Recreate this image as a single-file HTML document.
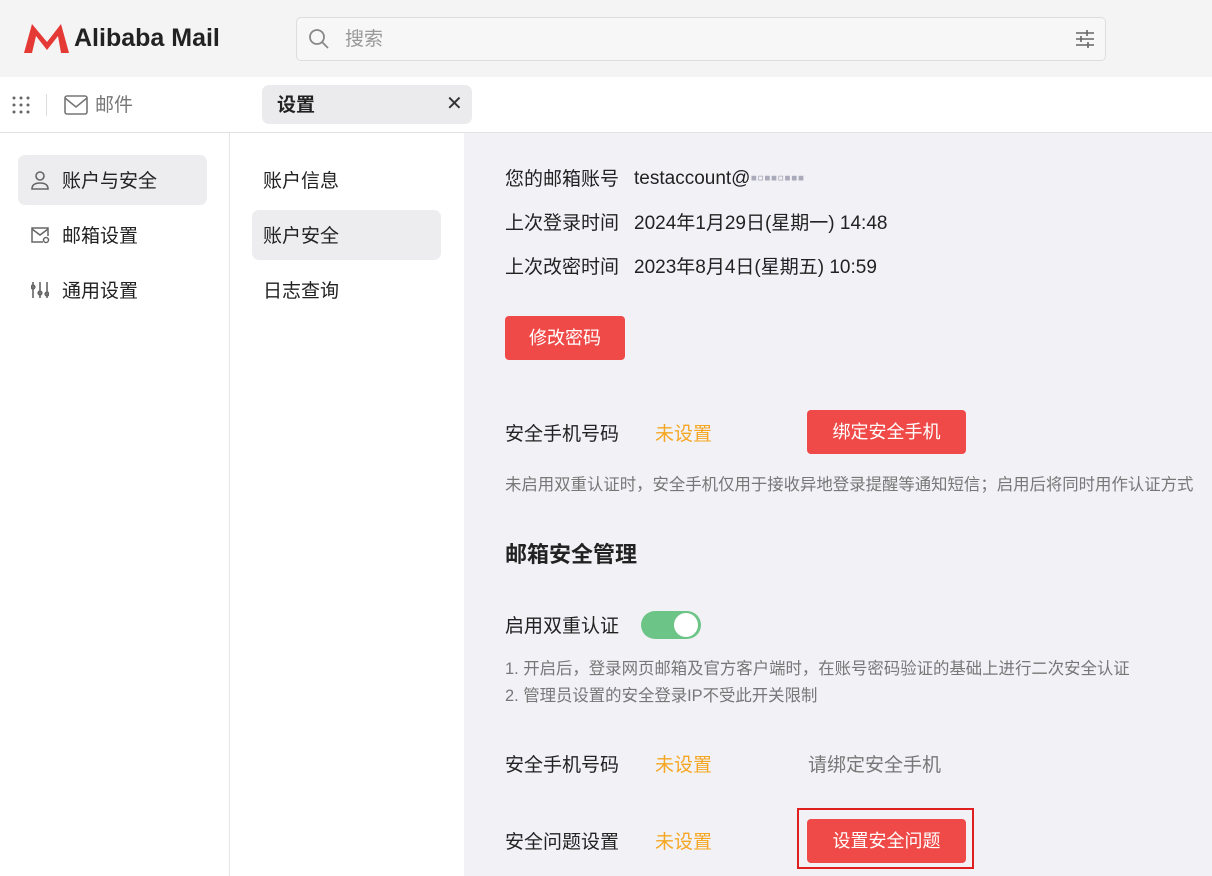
<!DOCTYPE html>
<html><head><meta charset="utf-8"><style>
*{margin:0;padding:0;box-sizing:border-box}
body{width:1212px;height:876px;overflow:hidden;font-family:"Liberation Sans","Noto Sans CJK SC",sans-serif;background:#fff;position:relative;color:#222}
.a{position:absolute;white-space:nowrap}
.top{left:0;top:0;width:1212px;height:77px;background:#f4f4f5}
.search{left:296px;top:17px;width:810px;height:44px;border:1px solid #ddd;border-radius:5px;background:#f7f7f8}
.bar{left:0;top:77px;width:1212px;height:56px;background:#fff;border-bottom:1px solid #e2e2e4}
.main{left:464px;top:133px;width:748px;height:743px;background:#f2f1f6}
.f17{font-size:19px}
.btn{background:#ef4a48;color:#fff;border-radius:4px;font-size:18px;text-align:center}
.or{color:#f5a623;font-size:19px}
.g{color:#777;font-size:16.4px}
</style></head><body>
<div class="a top"></div>
<svg class="a" style="left:24px;top:24px" width="46" height="30" viewBox="0 0 46 30"><path d="M0 29 L8 0 L23 18 L37 0 L45 29 L37 29 L34 12 L23 26 L12 12 L8 29Z" fill="#e53935"/></svg>
<div class="a" style="left:74px;top:24px;font-size:25px;font-weight:bold;color:#222">Alibaba Mail</div>
<div class="a search"></div>
<svg class="a" style="left:308px;top:28px" width="22" height="22" viewBox="0 0 22 22"><circle cx="9" cy="9" r="7" fill="none" stroke="#888" stroke-width="1.8"/><path d="M14 14l6 6" stroke="#888" stroke-width="1.8"/></svg>
<div class="a" style="left:345px;top:24px;font-size:19px;color:#999">搜索</div>
<svg class="a" style="left:1075px;top:29px" width="20" height="20" viewBox="0 0 20 20" stroke="#666" stroke-width="1.6"><path d="M1 4h18M1 10h18M1 16h18"/><path d="M12 1v6M6 7v6M13 13v6" /></svg>
<div class="a bar"></div>
<svg class="a" style="left:12px;top:96px" width="18" height="18"><g fill="#666"><circle cx="2" cy="2" r="1.5"/><circle cx="9" cy="2" r="1.5"/><circle cx="16" cy="2" r="1.5"/><circle cx="2" cy="9" r="1.5"/><circle cx="9" cy="9" r="1.5"/><circle cx="16" cy="9" r="1.5"/><circle cx="2" cy="16" r="1.5"/><circle cx="9" cy="16" r="1.5"/><circle cx="16" cy="16" r="1.5"/></g></svg>
<div class="a" style="left:46px;top:94px;width:1px;height:22px;background:#ddd"></div>
<svg class="a" style="left:64px;top:95px" width="24" height="20"><rect x="1" y="1" width="22" height="18" rx="2" fill="none" stroke="#777" stroke-width="1.6"/><path d="M1 3l11 9 11-9" fill="none" stroke="#777" stroke-width="1.6"/></svg>
<div class="a" style="left:95px;top:90px;font-size:19px;color:#777">邮件</div>
<div class="a" style="left:262px;top:85px;width:210px;height:39px;background:#ebebee;border-radius:7px"></div>
<div class="a" style="left:277px;top:90px;font-size:19px;font-weight:bold;color:#222">设置</div>
<div class="a" style="left:446px;top:91px;font-size:20px;color:#333">✕</div>
<div class="a" style="left:229px;top:133px;width:1px;height:743px;background:#e5e5e7"></div>
<div class="a" style="left:18px;top:155px;width:189px;height:50px;background:#ededf0;border-radius:7px"></div>
<svg class="a" style="left:30px;top:170px" width="20" height="20" fill="none" stroke="#666" stroke-width="1.6"><circle cx="10" cy="6" r="4"/><path d="M2 19c0-5 4-6 8-6s8 1 8 6z"/></svg>
<div class="a f17" style="left:62px;top:166px">账户与安全</div>
<svg class="a" style="left:30px;top:226px" width="20" height="18" fill="none" stroke="#666" stroke-width="1.5"><path d="M13 16H2V2h16v8"/><path d="M2 3l8 6 8-6"/><circle cx="16" cy="14" r="2.5"/></svg>
<div class="a f17" style="left:62px;top:221px">邮箱设置</div>
<svg class="a" style="left:31px;top:281px" width="18" height="18" stroke="#666" stroke-width="1.6" fill="none"><path d="M2 1v16M9 1v16M16 1v16"/><circle cx="2" cy="6" r="1.8"/><circle cx="9" cy="12" r="1.8"/><circle cx="16" cy="13" r="1.8"/></svg>
<div class="a f17" style="left:62px;top:276px">通用设置</div>
<div class="a f17" style="left:263px;top:166px">账户信息</div>
<div class="a" style="left:252px;top:210px;width:189px;height:50px;background:#ededf0;border-radius:7px"></div>
<div class="a f17" style="left:263px;top:221px">账户安全</div>
<div class="a f17" style="left:263px;top:276px">日志查询</div>
<div class="a main"></div>
<div class="a f17" style="left:505px;top:164px">您的邮箱账号</div>
<div class="a f17" style="left:634px;top:168px">testaccount@<span style="color:#aab">▪▫▪▪▫▪▪▪</span></div>
<div class="a f17" style="left:505px;top:208px">上次登录时间</div>
<div class="a f17" style="left:634px;top:208px">2024年1月29日(星期一) 14:48</div>
<div class="a f17" style="left:505px;top:252px">上次改密时间</div>
<div class="a f17" style="left:634px;top:252px">2023年8月4日(星期五) 10:59</div>
<div class="a btn" style="left:505px;top:316px;width:120px;height:44px;line-height:44px">修改密码</div>
<div class="a f17" style="left:505px;top:419px">安全手机号码</div>
<div class="a or" style="left:655px;top:419px">未设置</div>
<div class="a btn" style="left:807px;top:410px;width:159px;height:44px;line-height:44px">绑定安全手机</div>
<div class="a g" style="left:505px;top:471px">未启用双重认证时，安全手机仅用于接收异地登录提醒等通知短信；启用后将同时用作认证方式</div>
<div class="a" style="left:505px;top:537px;font-size:22px;font-weight:bold">邮箱安全管理</div>
<div class="a f17" style="left:505px;top:611px">启用双重认证</div>
<div class="a" style="left:641px;top:611px;width:60px;height:28px;border-radius:14px;background:#6cc487"></div>
<div class="a" style="left:674px;top:613px;width:24px;height:24px;border-radius:12px;background:#fff"></div>
<div class="a g" style="left:505px;top:655px">1. 开启后，登录网页邮箱及官方客户端时，在账号密码验证的基础上进行二次安全认证</div>
<div class="a g" style="left:505px;top:682px">2. 管理员设置的安全登录IP不受此开关限制</div>
<div class="a f17" style="left:505px;top:750px">安全手机号码</div>
<div class="a or" style="left:655px;top:750px">未设置</div>
<div class="a f17" style="left:808px;top:750px;color:#777">请绑定安全手机</div>
<div class="a f17" style="left:505px;top:827px">安全问题设置</div>
<div class="a or" style="left:655px;top:827px">未设置</div>
<div class="a" style="left:797px;top:808px;width:177px;height:61px;border:2px solid #e02020"></div>
<div class="a btn" style="left:807px;top:819px;width:159px;height:44px;line-height:44px">设置安全问题</div>
</body></html>
